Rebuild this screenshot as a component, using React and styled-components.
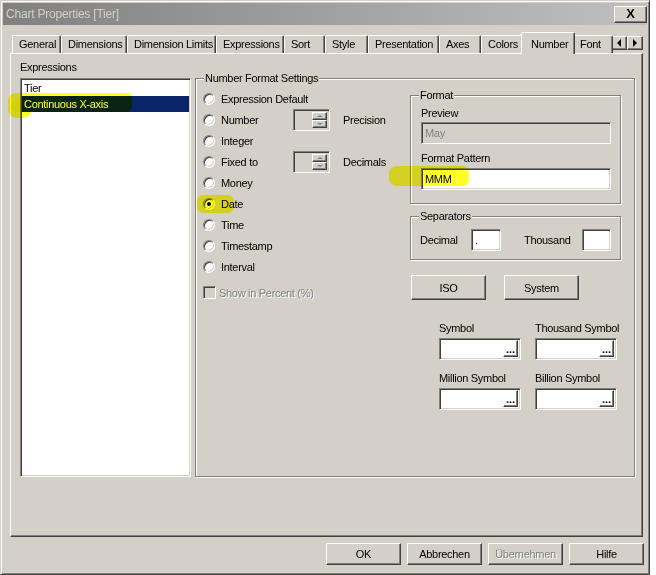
import React from "react";
import styled, { createGlobalStyle } from "styled-components";

const GlobalStyle = createGlobalStyle`
  html, body { margin: 0; padding: 0; background: #fff; }
  body { font-family: "Liberation Sans", Arial, sans-serif; font-size: 11px; color: #000; }
  * { box-sizing: border-box; }
`;

let Window = styled.div`
  position: relative;
  width: 650px;
  height: 575px;
  background: #d4d0c8;
  border: 1px solid;
  border-color: #d4d0c8 #404040 #404040 #d4d0c8;
  box-shadow: inset 1px 1px #fff, inset -1px -1px #808080;
  padding: 2px;
  display: flex;
  flex-direction: column;
  font-family: "Liberation Sans", Arial, sans-serif;
  font-size: 11px;
  letter-spacing: -0.3px;
`;

let TitleBar = styled.div`
  height: 22px;
  flex: none;
  display: flex;
  align-items: center;
  justify-content: space-between;
  padding-left: 3px;
  background: linear-gradient(to right, #808080, #c0c0c0);
  .title {
    color: #d4d0c8;
    font-size: 12px;
    letter-spacing: -0.2px;
  }
`;

let CloseButton = styled.div`
  width: 33px;
  height: 17px;
  background: #d4d0c8;
  border: 1px solid;
  border-color: #fff #404040 #404040 #fff;
  box-shadow: inset -1px -1px #808080;
  font-weight: bold;
  font-size: 13px;
  letter-spacing: 0;
  line-height: 14px;
  text-align: center;
`;

let Body = styled.div`
  flex: 1;
  display: flex;
  flex-direction: column;
  padding: 7px 3px 0 7px;
`;

let TabStrip = styled.div`
  position: relative;
  z-index: 1;
  width: 633px;
  height: 22px;
  display: flex;
  align-items: flex-end;
  padding-left: 2px;
  overflow: hidden;
`;

let Tab = styled.div`
  position: relative;
  z-index: ${p => (p.$active ? 2 : 1)};
  flex: none;
  width: ${p => (p.$active ? p.$w + 4 : p.$w)}px;
  height: ${p => (p.$active ? 22 : 18)}px;
  margin: ${p => (p.$active ? "0 -2px" : "0 0 1px")};
  padding-left: ${p => (p.$active ? 9 : 6)}px;
  padding-top: ${p => (p.$active ? 3 : 0)}px;
  line-height: 16px;
  white-space: nowrap;
  background: #d4d0c8;
  border: 1px solid;
  border-bottom: none;
  border-color: #fff #404040 transparent #fff;
  border-radius: 2px 2px 0 0;
  box-shadow: inset -1px 0 #808080;
`;

let TabArrows = styled.div`
  position: absolute;
  right: 0;
  top: 4px;
  display: flex;
  background: #d4d0c8;
`;

let ArrowButton = styled.div`
  width: 16px;
  height: 14px;
  border: 1px solid;
  border-color: #fff #404040 #404040 #fff;
  box-shadow: inset -1px -1px #808080;
  display: flex;
  align-items: center;
  justify-content: center;
  &::after {
    content: "";
    border-top: 4px solid transparent;
    border-bottom: 4px solid transparent;
    ${p => (p.$dir === "left" ? "border-right: 4px solid #000;" : "border-left: 4px solid #000;")}
  }
`;

let Panel = styled.div`
  width: 633px;
  height: 484px;
  margin-top: -1px;
  border: 1px solid;
  border-color: #fff #404040 #404040 #fff;
  box-shadow: inset -1px -1px #808080;
  padding: 6px 0 0 9px;
  display: grid;
  grid-template-columns: 171px 440px;
  grid-template-rows: 18px 399px;
  column-gap: 4px;
  align-content: start;
`;

let Label = styled.div`
  line-height: 14px;
  white-space: nowrap;
  color: ${p => (p.$disabled ? "#808080" : "#000")};
  text-shadow: ${p => (p.$disabled ? "1px 1px #fff" : "none")};
`;

let ListBox = styled.div`
  grid-column: 1;
  grid-row: 2;
  background: #fff;
  border: 1px solid;
  border-color: #808080 #fff #fff #808080;
  box-shadow: inset 1px 1px #404040, inset -1px -1px #d4d0c8;
  padding: 1px;
`;

let ListItem = styled.div`
  height: 16px;
  line-height: 16px;
  padding-left: 2px;
  background: ${p => (p.$selected ? "#0a246a" : "transparent")};
  color: ${p => (p.$selected ? "#fff" : "#000")};
`;

let GroupBox = styled.div`
  position: relative;
  border: 1px solid #808080;
  box-shadow: inset 1px 1px #fff, 1px 1px #fff;
  .legend {
    position: absolute;
    top: -7px;
    left: 8px;
    padding: 0 1px;
    line-height: 13px;
    background: #d4d0c8;
    white-space: nowrap;
  }
`;

let SettingsGroup = styled(GroupBox)`
  grid-column: 2;
  grid-row: 2;
  display: flex;
  padding: 9px 13px 0 7px;
`;

let LeftColumn = styled.div`
  width: 208px;
  display: flex;
  flex-direction: column;
`;

let RightColumn = styled.div`
  width: 211px;
  margin-top: 7px;
  display: flex;
  flex-direction: column;
`;

let OptionRow = styled.div`
  height: 21px;
  display: flex;
  align-items: center;
  margin-top: ${p => p.$gap || 0}px;
  .choice {
    width: 90px;
    display: flex;
    align-items: center;
  }
  .side {
    margin-left: 13px;
  }
`;

let Radio = styled.div`
  position: relative;
  width: 12px;
  height: 12px;
  flex: none;
  border-radius: 50%;
  background: #fff;
  border: 1px solid;
  border-color: #808080 #fff #fff #808080;
  box-shadow: inset 1px 1px #404040, inset -1px -1px #d4d0c8;
  margin-right: 6px;
  &::after {
    content: "";
    display: ${p => (p.$checked ? "block" : "none")};
    position: absolute;
    left: 3px;
    top: 3px;
    width: 4px;
    height: 4px;
    border-radius: 50%;
    background: #000;
  }
`;

let CheckBox = styled.div`
  width: 13px;
  height: 13px;
  flex: none;
  margin-right: 3px;
  background: #d4d0c8;
  border: 1px solid;
  border-color: #808080 #fff #fff #808080;
  box-shadow: inset 1px 1px #404040, inset -1px -1px #d4d0c8;
`;

let Sunken = styled.div`
  width: ${p => p.$w}px;
  height: ${p => p.$h || 22}px;
  margin-top: ${p => p.$mt || 0}px;
  flex: none;
  background: ${p => (p.$disabled ? "#d4d0c8" : "#fff")};
  color: ${p => (p.$disabled ? "#808080" : "#000")};
  border: 1px solid;
  border-color: #808080 #fff #fff #808080;
  box-shadow: inset 1px 1px #404040, inset -1px -1px #d4d0c8;
  padding: 2px 3px;
  line-height: 16px;
  white-space: nowrap;
`;

let Spinner = styled(Sunken)`
  display: flex;
  flex-direction: column;
  align-items: flex-end;
  padding: 2px;
`;

let SpinButton = styled.div`
  width: 15px;
  height: 9px;
  border: 1px solid;
  border-color: #fff #404040 #404040 #fff;
  box-shadow: inset -1px -1px #808080;
  display: flex;
  align-items: center;
  justify-content: center;
  &::after {
    content: "";
    border-left: 3px solid transparent;
    border-right: 3px solid transparent;
    ${p => (p.$up ? "border-bottom: 2px solid #808080;" : "border-top: 2px solid #808080;")}
  }
`;

let FormatGroup = styled(GroupBox)`
  padding: 10px 10px 13px 10px;
`;

let SeparatorGroup = styled(GroupBox)`
  margin-top: 12px;
  padding: 12px 9px 8px 9px;
  display: flex;
  align-items: center;
  .dec { width: 51px; }
  .thou { width: 58px; margin-left: 23px; }
`;

let ButtonRow = styled.div`
  display: flex;
  gap: 18px;
  margin: 15px 0 0 1px;
`;

let PushButton = styled.div`
  width: ${p => p.$w || 75}px;
  height: ${p => p.$h || 22}px;
  flex: none;
  display: flex;
  align-items: center;
  justify-content: center;
  background: #d4d0c8;
  border: 1px solid;
  border-color: #fff #404040 #404040 #fff;
  box-shadow: inset -1px -1px #808080;
  color: ${p => (p.$disabled ? "#808080" : "#000")};
  text-shadow: ${p => (p.$disabled ? "1px 1px #fff" : "none")};
`;

let SymbolGrid = styled.div`
  margin-top: 21px;
  padding-left: 29px;
  display: grid;
  grid-template-columns: 82px 82px;
  column-gap: 14px;
  .second { margin-top: 11px; }
`;

let SymbolField = styled(Sunken)`
  display: flex;
  justify-content: flex-end;
  align-items: flex-end;
  padding: 2px;
`;

let DotsButton = styled.div`
  width: 15px;
  height: 17px;
  border: 1px solid;
  border-color: #fff #404040 #404040 #fff;
  box-shadow: inset -1px -1px #808080;
  font-weight: bold;
  font-size: 11px;
  letter-spacing: 0;
  line-height: 17px;
  text-align: center;
`;

let Footer = styled.div`
  display: flex;
  justify-content: flex-end;
  gap: 6px;
  margin-top: 6px;
`;

let Marker = styled.div`
  position: absolute;
  left: ${p => p.$x - 1}px;
  top: ${p => p.$y - 1}px;
  width: ${p => p.$w}px;
  height: ${p => p.$h}px;
  background: #ffff2a;
  mix-blend-mode: multiply;
  border-radius: ${p => p.$r || "6px"};
  filter: blur(0.6px);
  pointer-events: none;
`;

const tabs = [
  ["General", 49], ["Dimensions", 66], ["Dimension Limits", 89], ["Expressions", 68],
  ["Sort", 41], ["Style", 43], ["Presentation", 71], ["Axes", 42], ["Colors", 42],
  ["Number", 50], ["Font", 40],
];

const formats = ["Expression Default", "Number", "Integer", "Fixed to", "Money", "Date", "Time", "Timestamp", "Interval"];

function SymbolInput() {
  return (
    <SymbolField $w={82} $mt={3}>
      <DotsButton>...</DotsButton>
    </SymbolField>
  );
}

export default function App() {
  return (
    <>
      <GlobalStyle />
      <Window>
        <TitleBar>
          <span className="title">Chart Properties [Tier]</span>
          <CloseButton>X</CloseButton>
        </TitleBar>
        <Body>
          <TabStrip>
            {tabs.map(([name, w]) => (
              <Tab key={name} $w={w} $active={name === "Number"}>{name}</Tab>
            ))}
            <TabArrows>
              <ArrowButton $dir="left" />
              <ArrowButton $dir="right" />
            </TabArrows>
          </TabStrip>
          <Panel>
            <Label>Expressions</Label>
            <ListBox>
              <ListItem>Tier</ListItem>
              <ListItem $selected>Continuous X-axis</ListItem>
            </ListBox>
            <SettingsGroup>
              <span className="legend">Number Format Settings</span>
              <LeftColumn>
                {formats.map(f => (
                  <OptionRow key={f}>
                    <div className="choice">
                      <Radio $checked={f === "Date"} />
                      <Label>{f}</Label>
                    </div>
                    {(f === "Number" || f === "Fixed to") && (
                      <>
                        <Spinner $w={37} $disabled>
                          <SpinButton $up />
                          <SpinButton />
                        </Spinner>
                        <Label className="side">{f === "Number" ? "Precision" : "Decimals"}</Label>
                      </>
                    )}
                  </OptionRow>
                ))}
                <OptionRow $gap={5}>
                  <CheckBox />
                  <Label $disabled>Show in Percent (%)</Label>
                </OptionRow>
              </LeftColumn>
              <RightColumn>
                <FormatGroup>
                  <span className="legend">Format</span>
                  <Label>Preview</Label>
                  <Sunken $w={190} $mt={2} $disabled>May</Sunken>
                  <Label style={{ marginTop: 7 }}>Format Pattern</Label>
                  <Sunken $w={190} $mt={3}>MMM</Sunken>
                </FormatGroup>
                <SeparatorGroup>
                  <span className="legend">Separators</span>
                  <Label className="dec">Decimal</Label>
                  <Sunken $w={30}>.</Sunken>
                  <Label className="thou">Thousand</Label>
                  <Sunken $w={29} />
                </SeparatorGroup>
                <ButtonRow>
                  <PushButton $h={25}>ISO</PushButton>
                  <PushButton $h={25}>System</PushButton>
                </ButtonRow>
                <SymbolGrid>
                  <div>
                    <Label>Symbol</Label>
                    <SymbolInput />
                  </div>
                  <div>
                    <Label>Thousand Symbol</Label>
                    <SymbolInput />
                  </div>
                  <div className="second">
                    <Label>Million Symbol</Label>
                    <SymbolInput />
                  </div>
                  <div className="second">
                    <Label>Billion Symbol</Label>
                    <SymbolInput />
                  </div>
                </SymbolGrid>
              </RightColumn>
            </SettingsGroup>
          </Panel>
          <Footer>
            <PushButton>OK</PushButton>
            <PushButton>Abbrechen</PushButton>
            <PushButton $disabled>Übernehmen</PushButton>
            <PushButton>Hilfe</PushButton>
          </Footer>
        </Body>
        <Marker $x={8} $y={93} $w={124} $h={19} $r="8px 4px 6px 10px" />
        <Marker $x={8} $y={100} $w={24} $h={18} $r="10px" />
        <Marker $x={197} $y={195} $w={37} $h={18} $r="6px" />
        <Marker $x={389} $y={166} $w={80} $h={20} $r="8px 6px 6px 8px" />
      </Window>
    </>
  );
}
